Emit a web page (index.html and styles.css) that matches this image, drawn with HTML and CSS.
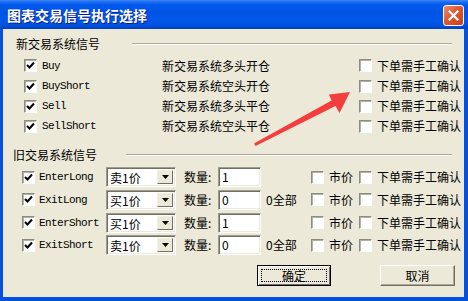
FILE: index.html
```html
<!DOCTYPE html>
<html>
<head>
    <title>图表交易信号执行选择</title>
    <link rel="stylesheet" href="styles.css">
</head>
<body>
    <div class="window">
        <div class="titlebar">
            <div class="title">图表交易信号执行选择</div>
            <div class="close-btn">
                <svg width="11" height="11" viewBox="0 0 11 11"><path d="M1.5 1.5 L9.5 9.5 M9.5 1.5 L1.5 9.5" stroke="#fff" stroke-width="2.2" stroke-linecap="square"/></svg>
            </div>
        </div>
        <div class="dialog">
            <div class="group-head head-new">
                <span class="group-label">新交易系统信号</span>
                <span class="etch"></span>
            </div>
            <div class="new-rows">
                <span class="check on"><svg width="9" height="9" viewBox="0 0 9 9"><path d="M1 4 L3.5 6.5 L8 1.5" fill="none" stroke="#000" stroke-width="2"/></svg></span>
                <span class="sig">Buy</span>
                <span>新交易系统多头开仓</span>
                <span class="check"></span>
                <span>下单需手工确认</span>

                <span class="check on"><svg width="9" height="9" viewBox="0 0 9 9"><path d="M1 4 L3.5 6.5 L8 1.5" fill="none" stroke="#000" stroke-width="2"/></svg></span>
                <span class="sig">BuyShort</span>
                <span>新交易系统空头开仓</span>
                <span class="check"></span>
                <span>下单需手工确认</span>

                <span class="check on"><svg width="9" height="9" viewBox="0 0 9 9"><path d="M1 4 L3.5 6.5 L8 1.5" fill="none" stroke="#000" stroke-width="2"/></svg></span>
                <span class="sig">Sell</span>
                <span>新交易系统多头平仓</span>
                <span class="check"></span>
                <span>下单需手工确认</span>

                <span class="check on"><svg width="9" height="9" viewBox="0 0 9 9"><path d="M1 4 L3.5 6.5 L8 1.5" fill="none" stroke="#000" stroke-width="2"/></svg></span>
                <span class="sig">SellShort</span>
                <span>新交易系统空头平仓</span>
                <span class="check"></span>
                <span>下单需手工确认</span>
            </div>

            <div class="group-head head-old">
                <span class="group-label">旧交易系统信号</span>
                <span class="etch"></span>
            </div>
            <div class="old-rows">
                <span class="check on"><svg width="9" height="9" viewBox="0 0 9 9"><path d="M1 4 L3.5 6.5 L8 1.5" fill="none" stroke="#000" stroke-width="2"/></svg></span>
                <span class="sig">EnterLong</span>
                <div class="combo"><span class="combo-text">卖1价</span><span class="drop"><svg width="7" height="4" viewBox="0 0 7 4"><path d="M0 0 H7 L3.5 4 Z" fill="#000"/></svg></span></div>
                <span>数量:</span>
                <div class="edit">1</div>
                <span></span>
                <span class="check"></span>
                <span>市价</span>
                <span class="check"></span>
                <span>下单需手工确认</span>

                <span class="check on"><svg width="9" height="9" viewBox="0 0 9 9"><path d="M1 4 L3.5 6.5 L8 1.5" fill="none" stroke="#000" stroke-width="2"/></svg></span>
                <span class="sig">ExitLong</span>
                <div class="combo"><span class="combo-text">买1价</span><span class="drop"><svg width="7" height="4" viewBox="0 0 7 4"><path d="M0 0 H7 L3.5 4 Z" fill="#000"/></svg></span></div>
                <span>数量:</span>
                <div class="edit">0</div>
                <span>0全部</span>
                <span class="check"></span>
                <span>市价</span>
                <span class="check"></span>
                <span>下单需手工确认</span>

                <span class="check on"><svg width="9" height="9" viewBox="0 0 9 9"><path d="M1 4 L3.5 6.5 L8 1.5" fill="none" stroke="#000" stroke-width="2"/></svg></span>
                <span class="sig">EnterShort</span>
                <div class="combo"><span class="combo-text">买1价</span><span class="drop"><svg width="7" height="4" viewBox="0 0 7 4"><path d="M0 0 H7 L3.5 4 Z" fill="#000"/></svg></span></div>
                <span>数量:</span>
                <div class="edit">1</div>
                <span></span>
                <span class="check"></span>
                <span>市价</span>
                <span class="check"></span>
                <span>下单需手工确认</span>

                <span class="check on"><svg width="9" height="9" viewBox="0 0 9 9"><path d="M1 4 L3.5 6.5 L8 1.5" fill="none" stroke="#000" stroke-width="2"/></svg></span>
                <span class="sig">ExitShort</span>
                <div class="combo"><span class="combo-text">卖1价</span><span class="drop"><svg width="7" height="4" viewBox="0 0 7 4"><path d="M0 0 H7 L3.5 4 Z" fill="#000"/></svg></span></div>
                <span>数量:</span>
                <div class="edit">0</div>
                <span>0全部</span>
                <span class="check"></span>
                <span>市价</span>
                <span class="check"></span>
                <span>下单需手工确认</span>
            </div>

            <div class="buttons">
                <div class="btn default">确定</div>
                <div class="btn">取消</div>
            </div>
        </div>

        <!-- red annotation arrow drawn over the dialog -->
        <svg class="arrow" width="468" height="301" viewBox="0 0 468 301">
            <polygon points="254,143.5 331.5,100.5 329,94.5 350,92 339.5,113 335.5,106 255.5,146" fill="#f43d3d"/>
        </svg>
    </div>
</body>
</html>
```

FILE: styles.css
```css
html, body {
    margin: 0;
    padding: 0;
}

body {
    width: 468px;
    height: 301px;
    overflow: hidden;
    font-family: "Noto Sans CJK SC", sans-serif;
    font-size: 12px;
    color: #000;
}

.window {
    position: relative;
    width: 468px;
    height: 301px;
    display: flex;
    flex-direction: column;
    background: #0650e0;
}

.titlebar {
    height: 29px;
    display: flex;
    align-items: center;
    padding: 0 4px 0 7px;
    background: linear-gradient(#3e8af7 0, #1d6cf2 2px, #0058ee 5px, #0054e3 45%, #0057ea 70%, #0050dd 88%, #0041c4 100%);
}

.title {
    flex: 1;
    color: #fff;
    font-weight: bold;
    font-size: 14px;
    line-height: 16px;
    text-shadow: 1px 1px #0a1e8a;
}

.close-btn {
    width: 21px;
    height: 21px;
    margin-top: 2px;
    box-sizing: border-box;
    border: 1px solid #fff;
    border-radius: 3px;
    background: linear-gradient(135deg, #ec8f72 0, #e0582f 45%, #c8401c 100%);
    display: flex;
    align-items: center;
    justify-content: center;
}

.dialog {
    flex: 1;
    margin: 0 4px 4px 3px;
    padding-top: 8px;
    background: #ece9d8;
}

.group-head {
    display: flex;
    align-items: center;
    height: 14px;
    line-height: 14px;
    margin-right: 12px;
}

.head-new {
    padding-left: 13px;
}

.head-new .etch {
    margin-left: 32px;
}

.head-old {
    padding-left: 10px;
    margin-top: 12px;
}

.head-old .etch {
    margin-left: 29px;
}

.etch {
    flex: 1;
    height: 0;
    border-top: 1px solid #aca899;
    border-bottom: 1px solid #fff;
}

.new-rows {
    display: grid;
    grid-template-columns: 18px 120px 197px 18px auto;
    grid-template-rows: 21px 20px 20px 20px;
    align-items: center;
    padding-left: 21px;
    margin-top: 4px;
    line-height: 14px;
    white-space: nowrap;
}

.old-rows {
    display: grid;
    grid-template-columns: 17px 67px 78px 34px 48px 45px 18px 30px 18px auto;
    grid-template-rows: repeat(4, 22.67px);
    align-items: center;
    padding-left: 19px;
    margin-top: 4px;
    line-height: 14px;
    white-space: nowrap;
}

.sig {
    font-family: "Liberation Mono", monospace;
    font-size: 11px;
    letter-spacing: -0.6px;
}

.check {
    width: 13px;
    height: 13px;
    box-sizing: border-box;
    border: 1px solid;
    border-color: #8d8b80 #fff #fff #8d8b80;
    box-shadow: inset 1px 1px 0 #b4b1a4;
    background: #fff;
    display: flex;
    align-items: center;
    justify-content: center;
}

.combo {
    width: 70px;
    height: 20px;
    box-sizing: border-box;
    border: 1px solid;
    border-color: #9d9a8e #fff #fff #9d9a8e;
    box-shadow: inset 1px 1px 0 #716f64, inset -1px -1px 0 #ece9d8;
    background: #fff;
    display: flex;
    padding: 2px;
}

.combo-text {
    flex: 1;
    line-height: 16px;
    padding-left: 1px;
}

.drop {
    width: 16px;
    box-sizing: border-box;
    border: 1px solid;
    border-color: #f1efe2 #716f64 #716f64 #f1efe2;
    background: #ece9d8;
    display: flex;
    align-items: center;
    justify-content: center;
}

.edit {
    width: 43px;
    height: 20px;
    box-sizing: border-box;
    border: 1px solid;
    border-color: #9d9a8e #fff #fff #9d9a8e;
    box-shadow: inset 1px 1px 0 #716f64, inset -1px -1px 0 #ece9d8;
    background: #fff;
    padding: 2px 3px;
    line-height: 14px;
}

.buttons {
    display: flex;
    gap: 49px;
    padding-left: 254px;
    margin-top: 8px;
}

.btn {
    width: 75px;
    height: 21px;
    box-sizing: border-box;
    display: flex;
    align-items: center;
    justify-content: center;
    border: 1px solid;
    border-color: #fff #716f64 #716f64 #fff;
    box-shadow: inset -1px -1px 0 #aca899;
    background: #ece9d8;
}

.btn.default {
    width: 74px;
    border-color: #000;
    box-shadow: inset 1px 1px 0 #fff, inset -1px -1px 0 #716f64;
    outline: 1px dotted #000;
    outline-offset: -5px;
}

.arrow {
    position: absolute;
    left: 0;
    top: 0;
    pointer-events: none;
}
```
